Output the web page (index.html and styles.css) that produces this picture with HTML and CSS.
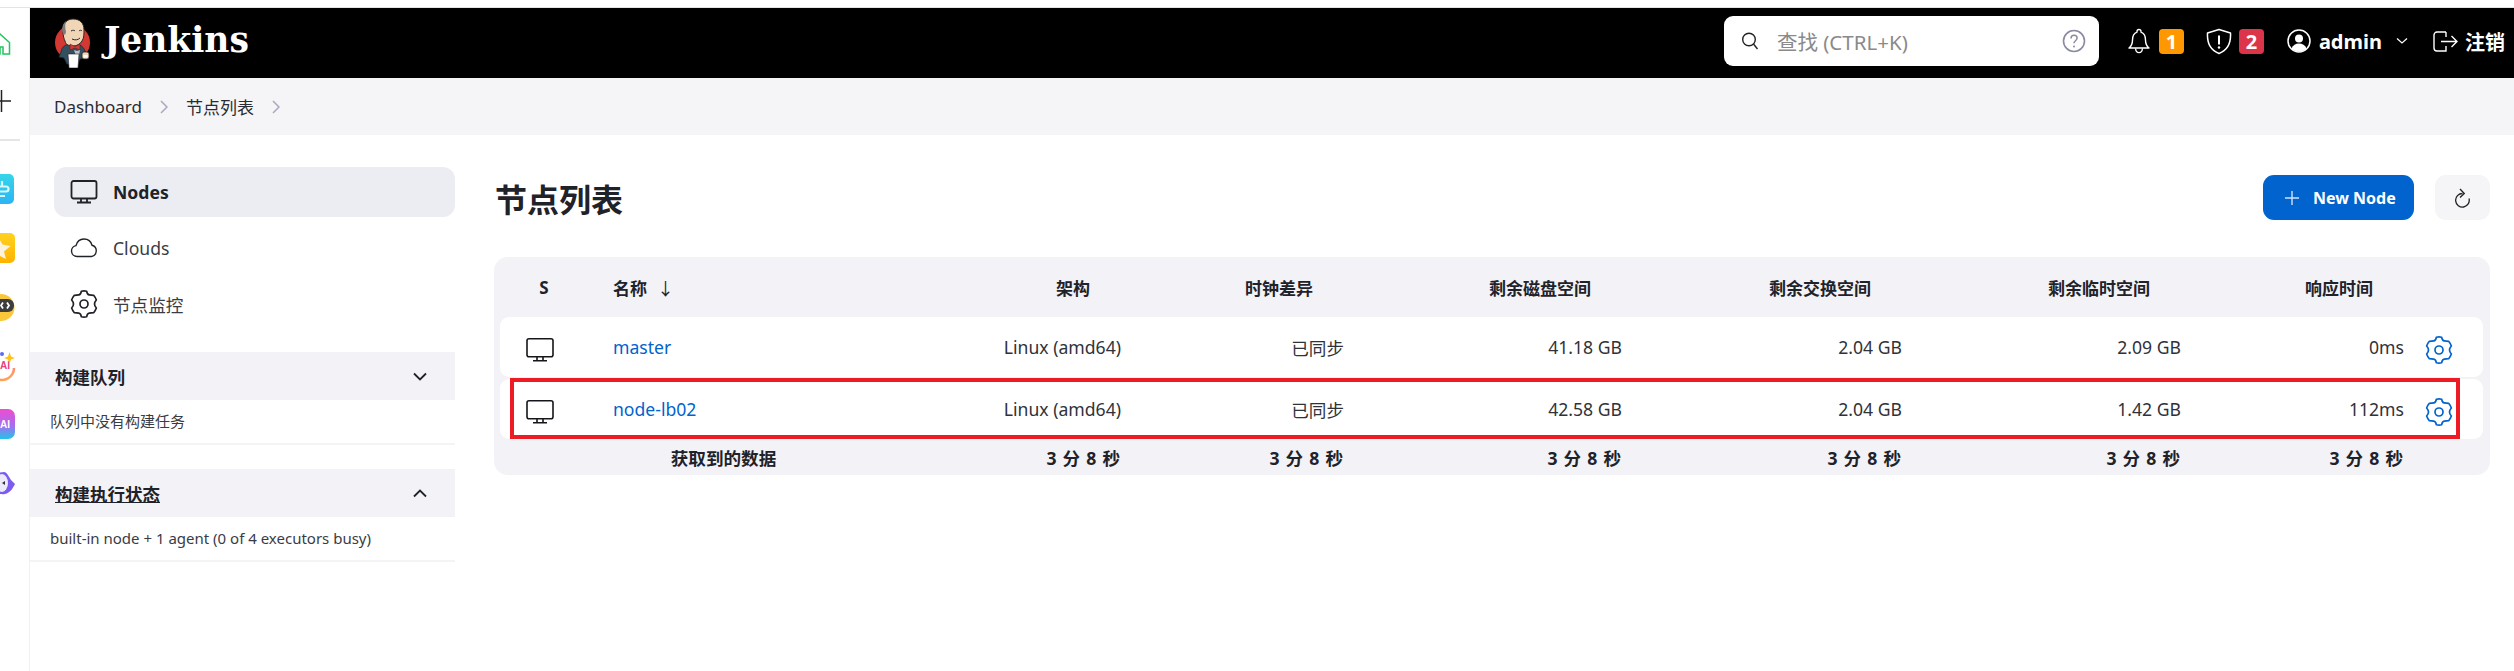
FILE: index.html
```html
<!DOCTYPE html>
<html lang="zh-CN">
<head>
<meta charset="utf-8">
<title>节点列表 - Jenkins</title>
<link rel="stylesheet" href="styles.css">
</head>
<body>
<div class="topline"></div>
<div class="shell">
  <aside class="rail">
    <svg class="ri ri-home" viewBox="0 0 29 22"><path d="M-10 11 0 1l9.500 8.500V21H3v-7H0v7h-8" fill="none" stroke="#22c55e" stroke-width="1.500"/></svg>
    <svg class="ri ri-plus" viewBox="0 0 29 22"><path d="M0 11h11M1.500 0v22" fill="none" stroke="#222" stroke-width="1.500"/></svg>
    <div class="ri-div"></div>
    <svg class="ri ri-30" viewBox="0 0 29 30"><defs><linearGradient id="g1" x1="0" y1="0" x2="0" y2="1"><stop offset="0" stop-color="#37d5e8"/><stop offset="1" stop-color="#2bb4f5"/></linearGradient></defs><rect x="-20" y="0" width="34" height="30" rx="5" fill="url(#g1)"/><path d="M0 12.500h6a2.500 2.500 0 0 1 2.500 2.500A2.500 2.500 0 0 1 6 17.500H0M2 7v5M0 22h5" fill="none" stroke="#d8f7fb" stroke-width="2.200"/></svg>
    <svg class="ri ri-star" viewBox="0 0 29 30"><defs><linearGradient id="g2" x1="0" y1="0" x2="0" y2="1"><stop offset="0" stop-color="#ffd21f"/><stop offset="1" stop-color="#ffb300"/></linearGradient></defs><rect x="-20" y="0" width="35" height="30" rx="5" fill="url(#g2)"/><path d="M-2 4 2.500 11.500 10.500 13 4 18.500 6 26-2 22Z" fill="#fdf3dc"/></svg>
    <svg class="ri ri-bot" viewBox="0 0 29 27"><circle cx="1" cy="13.500" r="13.500" fill="#f9c83a"/><rect x="-8" y="5" width="22" height="13" rx="6" fill="#3d3d3d"/><path d="M3 8.500 1 11.500l2 3M7 8.500l2 3-2 3" fill="none" stroke="#fff" stroke-width="1.800"/></svg>
    <svg class="ri ri-ai" viewBox="0 0 29 30"><defs><linearGradient id="g3" x1="0" y1="0" x2="1" y2="1"><stop offset="0" stop-color="#ff5f9e"/><stop offset="1" stop-color="#ffb347"/></linearGradient></defs><path d="M-10 16a12 12 0 0 0 24 0" fill="none" stroke="url(#g3)" stroke-width="2.500"/><text class="ri-t ri-t-red" x="0" y="17">AI</text><circle cx="2" cy="2" r="2" fill="#5b6cf5"/><path d="M9.500 0 11 4.500 15 6 11 7.500 9.500 12 8 7.500 4 6 8 4.500Z" fill="#fcc419"/></svg>
    <svg class="ri ri-ai2" viewBox="0 0 29 30"><defs><linearGradient id="g4" x1="0" y1="0" x2="0" y2="1"><stop offset="0" stop-color="#f04bd0"/><stop offset=".55" stop-color="#a86cf0"/><stop offset="1" stop-color="#22c4e8"/></linearGradient></defs><rect x="-20" y="0" width="35" height="30" rx="7" fill="url(#g4)"/><text class="ri-t ri-t-white" x="0" y="19">AI</text></svg>
    <svg class="ri ri-blob" viewBox="0 0 29 24"><path d="M-10 12C-10 4-2 0 4 0c3 0 5 5 7 8l4 4c-2 4-5 9-10 10-7 1-15-2-15-10Z" fill="#7c5cf0"/><ellipse cx="2" cy="11" rx="6" ry="9" fill="#ece9fb"/><path d="M5 9 2 11l3 2Z" fill="#333"/></svg>
  </aside>
  <div class="app">
    <header class="hdr">
      <a class="brand">
        <svg class="brand-logo" viewBox="0 0 38 50">
          <circle cx="18.500" cy="24.500" r="17.500" fill="#d33833"/>
          <path d="M7 34C8 28 12 26 18 26s11 1 13 7l1 7-6 1-2 5H13l-3-6-5-1Z" fill="#335061" stroke="#1d2b33" stroke-width=".800"/>
          <path d="M9 13C9 5 13 1 19 1c7 0 11 4 11 11 0 4 0 8-2 11-2 3-5 5-9 5-4 0-7-1-8-5-1-2-2-5-2-10Z" fill="#f0d6b7" stroke="#2a2a2a" stroke-width="1"/>
          <path d="M9 15C7 11 9 5 12 3c-1 4-1 7 0 11l-1 3Z" fill="#7b7b7b"/>
          <path d="M17 13c2-1 3-1 4 0M25 13c1-1 2-1 3 0M18 21c3 1.500 6 1 8-1" fill="none" stroke="#2a2a2a" stroke-width="1"/>
          <path d="M16 26l5 2.500 5-2.500v6l-5-2-5 2Z" fill="#d33833" stroke="#5a1a18" stroke-width=".500"/>
          <path d="M20 32l3 1 3-1-1 5-3 1Z" fill="#b9c4ca"/>
          <path d="M14 36h11l-1 14H15Z" fill="#fff" stroke="#222" stroke-width=".600"/>
          <rect x="28" y="34" width="7" height="7" rx="2" fill="#f0d6b7" stroke="#222" stroke-width=".800"/>
          <rect x="29.500" y="37" width="4" height="2.500" fill="#fff"/>
        </svg>
        <span class="brand-name">Jenkins</span>
      </a>
      <div class="search">
        <svg class="search-ic" viewBox="0 0 18 18"><circle cx="8" cy="7.500" r="6.300" fill="none" stroke="#222" stroke-width="1.400"/><path d="m12.500 12 4 5" stroke="#222" stroke-width="1.400"/></svg>
        <span class="search-ph">查找 (CTRL+K)</span>
        <svg class="search-help" viewBox="0 0 24 24"><circle cx="12" cy="12" r="10.500" fill="none" stroke="#8a8aa3" stroke-width="1.600"/><path d="M9 9.500c0-2 1.400-3.200 3.100-3.200 1.800 0 3 1.200 3 2.800 0 2.600-3.100 2.600-3.100 5.200" fill="none" stroke="#8a8aa3" stroke-width="1.500"/><circle cx="12" cy="17.500" r="1" fill="#8a8aa3"/></svg>
      </div>
      <svg class="h-bell" viewBox="0 0 24 26"><path d="M12 1.500c-1.200 0-2 .8-2 2v.6C6.500 5.300 5.500 8.500 5.500 12c0 4-1.200 6.200-3.500 8h20c-2.300-1.800-3.500-4-3.500-8 0-3.500-1-6.700-4.500-7.900v-.6c0-1.200-.8-2-2-2Z" fill="none" stroke="#fff" stroke-width="1.400" stroke-linejoin="round"/><path d="M8.800 20.500a3.300 3.300 0 1 0 6.400 0" fill="none" stroke="#fff" stroke-width="1.400"/></svg>
      <span class="badge badge-o">1</span>
      <svg class="h-shield" viewBox="0 0 26 27"><path d="M13 1.500 24.500 5c.5 9-2 17-11.500 20.500C3.500 22 1 14 1.500 5Z" fill="none" stroke="#fff" stroke-width="1.500" stroke-linejoin="round"/><path d="M13 7.500v9" stroke="#fff" stroke-width="2"/><circle cx="13" cy="19.500" r="1.200" fill="#fff"/></svg>
      <span class="badge badge-r">2</span>
      <svg class="h-user" viewBox="0 0 24 24"><circle cx="12" cy="12" r="11" fill="none" stroke="#fff" stroke-width="1.500"/><circle cx="12" cy="9.500" r="4" fill="#fff"/><path d="M4.500 19.500c1.500-3.500 4-5 7.500-5s6 1.500 7.500 5c-2 2-4.500 3.200-7.500 3.200s-5.500-1.200-7.500-3.200Z" fill="#fff"/></svg>
      <span class="h-admin">admin</span>
      <svg class="h-chev" viewBox="0 0 12 8"><path d="M1 1.500 6 6l5-4.500" fill="none" stroke="#fff" stroke-width="1.200"/></svg>
      <svg class="h-logout" viewBox="0 0 25 21"><path d="M13 1H4a3 3 0 0 0-3 3v13a3 3 0 0 0 3 3h9v-5M13 1v5" fill="none" stroke="#fff" stroke-width="1.400"/><path d="M8 10.500h16M18.500 5l5.500 5.500-5.500 5.500" fill="none" stroke="#fff" stroke-width="1.400"/></svg>
      <span class="h-out">注销</span>
    </header>
    <nav class="crumbs">
      <span>Dashboard</span>
      <svg class="crumb-sep" viewBox="0 0 8 14"><path d="m1 1 6 6-6 6" fill="none" stroke="#a9a9bd" stroke-width="1.500"/></svg>
      <span>节点列表</span>
      <svg class="crumb-sep" viewBox="0 0 8 14"><path d="m1 1 6 6-6 6" fill="none" stroke="#a9a9bd" stroke-width="1.500"/></svg>
    </nav>
    <div class="page">
      <aside class="side">
        <ul class="menu">
          <li class="menu-item is-active">
            <svg class="menu-ic" viewBox="0 0 28 24"><rect x="1.500" y="1" width="25" height="17.500" rx="2" fill="none" stroke="#1f2229" stroke-width="1.800"/><path d="M11 18.500v3M17 18.500v3M7 22.500h14" fill="none" stroke="#1f2229" stroke-width="1.800"/></svg>
            <span>Nodes</span>
          </li>
          <li class="menu-item">
            <svg class="menu-ic" viewBox="0 0 28 20"><path d="M7 18.500a5.500 5.500 0 0 1-1-10.900C7 3.800 10 1 14 1c4 0 7 2.500 8 6.200a5.800 5.800 0 0 1-.500 11.300Z" fill="none" stroke="#1f2229" stroke-width="1.400"/></svg>
            <span>Clouds</span>
          </li>
          <li class="menu-item">
            <svg class="menu-ic" viewBox="0 0 28 28"><use href="#gear"/></svg>
            <span>节点监控</span>
          </li>
        </ul>
        <section class="panel panel-q">
          <div class="panel-head"><span>构建队列</span><svg class="panel-chev" viewBox="0 0 14 9"><path d="m1 1.500 6 6 6-6" fill="none" stroke="#1f2229" stroke-width="1.800"/></svg></div>
          <div class="panel-body">队列中没有构建任务</div>
        </section>
        <section class="panel panel-e">
          <div class="panel-head"><span class="u">构建执行状态</span><svg class="panel-chev" viewBox="0 0 14 9"><path d="m1 7.500 6-6 6 6" fill="none" stroke="#1f2229" stroke-width="1.800"/></svg></div>
          <div class="panel-body">built-in node + 1 agent (0 of 4 executors busy)</div>
        </section>
      </aside>
      <main class="main">
        <div class="bar">
          <h1 class="title">节点列表</h1>
          <a class="btn-new"><svg class="btn-plus" viewBox="0 0 16 16"><path d="M8 1v14M1 8h14" stroke="#cfe2fb" stroke-width="1.400"/></svg>New Node</a>
          <a class="btn-ref"><svg class="btn-ref-ic" viewBox="0 0 15 20"><path d="M7.500 5.500A6.800 6.800 0 1 0 14 10.500" fill="none" stroke="#222" stroke-width="1.300"/><path d="M5 1l4.300 4.500L5 9.500" fill="none" stroke="#222" stroke-width="1.300"/></svg></a>
        </div>
        <div class="card">
          <table class="tbl">
            <colgroup><col class="c-s"><col class="c-n"><col class="c-a"><col class="c-c"><col class="c-d"><col class="c-w"><col class="c-t"><col class="c-r"><col class="c-g"></colgroup>
            <thead>
              <tr><th class="th-s">S</th><th class="th-n">名称<span class="arrow">↓</span></th><th>架构</th><th>时钟差异</th><th>剩余磁盘空间</th><th>剩余交换空间</th><th>剩余临时空间</th><th>响应时间</th><th></th></tr>
            </thead>
            <tbody>
              <tr>
                <td class="td-s"><svg class="pc" viewBox="0 0 28 24"><rect x="1" y=".8" width="26" height="18" rx="2" fill="none" stroke="#14161a" stroke-width="1.600"/><path d="M11 19v3M17 19v3M7 22.800h14" fill="none" stroke="#14161a" stroke-width="1.600"/></svg></td>
                <td class="td-n"><a class="lnk">master</a></td><td>Linux (amd64)</td><td>已同步</td><td>41.18 GB</td><td>2.04 GB</td><td>2.09 GB</td><td>0ms</td>
                <td class="td-g"><svg class="gear" viewBox="0 0 28 28"><use href="#gear"/></svg></td>
              </tr>
              <tr>
                <td class="td-s"><svg class="pc" viewBox="0 0 28 24"><rect x="1" y=".8" width="26" height="18" rx="2" fill="none" stroke="#14161a" stroke-width="1.600"/><path d="M11 19v3M17 19v3M7 22.800h14" fill="none" stroke="#14161a" stroke-width="1.600"/></svg></td>
                <td class="td-n"><a class="lnk">node-lb02</a></td><td>Linux (amd64)</td><td>已同步</td><td>42.58 GB</td><td>2.04 GB</td><td>1.42 GB</td><td>112ms</td>
                <td class="td-g"><svg class="gear" viewBox="0 0 28 28"><use href="#gear"/></svg></td>
              </tr>
            </tbody>
            <tfoot>
              <tr><td class="tf-l" colspan="2">获取到的数据</td><td>3 分 8 秒</td><td>3 分 8 秒</td><td>3 分 8 秒</td><td>3 分 8 秒</td><td>3 分 8 秒</td><td>3 分 8 秒</td><td></td></tr>
            </tfoot>
          </table>
          <div class="mark"></div>
        </div>
      </main>
    </div>
  </div>
</div>
<svg class="defs" aria-hidden="true"><defs><g id="gear"><path d="M11.300 1.280Q14 .6 16.700 1.280Q17.200 4.600 19.250 4.910Q21.500 5.200 23.660 5.300Q25.500 7.500 26.360 9.980Q24.500 12 24.500 14Q24.500 16 26.360 18.020Q25.500 20.500 23.660 22.700Q21.500 22.800 19.250 23.090Q17.200 23.400 16.700 26.720Q14 27.400 11.300 26.720Q10.800 23.400 8.750 23.090Q6.500 22.800 4.340 22.700Q2.500 20.500 1.640 18.020Q3.500 16 3.500 14Q3.500 12 1.640 9.980Q2.500 7.500 4.340 5.300Q6.500 5.200 8.750 4.910Q10.800 4.600 11.300 1.280Z" fill="none" stroke="currentColor" stroke-width="1.700" stroke-linejoin="round"/><circle cx="14" cy="14" r="4" fill="none" stroke="currentColor" stroke-width="1.700"/></g></defs></svg>
</body>
</html>
```
FILE: styles.css
```css
* { box-sizing: border-box; }
html, body { margin: 0; padding: 0; height: 100%; overflow: hidden; background: #fff; }
body { font-family: "Noto Sans", "Noto Sans CJK SC", sans-serif; color: #1f2229; font-size: 17px; }
.defs { width: 0; height: 0; display: block; }
.topline { height: 8px; border-bottom: 1px solid #e3e3e3; }
.shell { display: flex; height: 663px; }

/* rail */
.rail { width: 30px; flex: none; border-right: 1px solid #f0f0f0; overflow: hidden; display: flex; flex-direction: column; align-items: flex-start; }
.ri { display: block; width: 29px; flex: none; }
.ri-home { height: 22px; margin-top: 25px; }
.ri-plus { height: 22px; margin-top: 35px; }
.ri-div { width: 20px; height: 2px; background: #e6e6e6; margin-top: 27px; flex: none; }
.ri-30 { height: 30px; margin-top: 33px; }
.ri-star { height: 30px; margin-top: 29px; }
.ri-bot { height: 27px; margin-top: 31px; }
.ri-ai { height: 30px; margin-top: 31px; }
.ri-ai2 { height: 30px; margin-top: 27px; }
.ri-blob { height: 24px; margin-top: 33px; }
.ri-t { font-family: "Liberation Sans", sans-serif; font-weight: 700; font-size: 10px; }
.ri-t-red { fill: #e8407a; }
.ri-t-white { fill: #fff; }

.app { flex: 1; min-width: 0; display: flex; flex-direction: column; }

/* header */
.hdr { height: 70px; background: #000; display: flex; align-items: center; padding: 0 9px 0 24px; color: #fff; flex: none; }
.brand { display: flex; align-items: center; }
.brand-logo { width: 38px; height: 50px; display: block; }
.brand-name { font-family: "DejaVu Serif", serif; font-weight: 700; font-size: 34.500px; margin-left: 12px; line-height: 1; margin-top: -6px; }
.search { margin-left: auto; width: 375px; height: 50px; background: #fff; border-radius: 9px; display: flex; align-items: center; padding: 0 13px 0 17px; margin-top: -4px; }
.search-ic { width: 18px; height: 18px; }
.search-ph { margin-left: 18px; font-size: 20.500px; color: #8a8a8a; }
.search-help { width: 24px; height: 24px; margin-left: auto; }
.h-bell { width: 24px; height: 26px; margin-left: 28px; margin-top: -4px; }
.badge { width: 25px; height: 25px; border-radius: 4px; font-weight: 700; font-size: 20px; line-height: 25px; text-align: center; color: #fff; margin-left: 8px; margin-top: -4px; }
.badge-r { margin-left: 7px; }
.badge-o { background: #ff9800; }
.badge-r { background: #dc354b; }
.h-shield { width: 26px; height: 27px; margin-left: 22px; margin-top: -4px; }
.h-user { width: 24px; height: 24px; margin-left: 23px; margin-top: -4px; }
.h-admin { font-weight: 700; font-size: 20px; margin-left: 8px; margin-top: -4px; }
.h-chev { width: 12px; height: 8px; margin-left: 14px; margin-top: -4px; }
.h-logout { width: 25px; height: 21px; margin-left: 25px; margin-top: -4px; }
.h-out { font-weight: 700; font-size: 20px; margin-left: 7px; margin-top: -4px; }

/* breadcrumbs */
.crumbs { height: 57px; background: #f5f5f7; display: flex; align-items: center; padding-left: 24px; flex: none; font-size: 17px; color: #2a2c33; }
.crumb-sep { width: 8px; height: 14px; margin: 0 18px; }

.page { flex: 1; display: flex; min-height: 0; }

/* sidebar */
.side { width: 425px; flex: none; padding-top: 32px; }
.menu { list-style: none; margin: 0 0 0 24px; padding: 0; display: flex; flex-direction: column; gap: 6px; }
.menu-item { height: 50px; display: flex; align-items: center; border-radius: 12px; padding-left: 16px; font-size: 17.600px; color: #3a3c44; }
.menu-item.is-active { background: #ecedf2; font-weight: 700; color: #1f2229; }
.menu-ic { width: 28px; height: 28px; color: #1f2229; margin-right: 15px; flex: none; }
.panel-q { margin-top: 23px; }
.panel-e { margin-top: 24px; }
.panel-head { height: 48px; background: #f2f2f7; display: flex; align-items: center; justify-content: space-between; padding: 0 28px 0 25px; font-weight: 700; font-size: 17.500px; }
.panel-head .u { text-decoration: underline; }
.panel-chev { width: 14px; height: 9px; }
.panel-body { height: 45px; border-bottom: 2px solid #f4f4f6; padding-left: 20px; font-size: 15px; line-height: 43px; color: #3a3c44; }

/* main */
.main { flex: 1; min-width: 0; padding: 40px 24px 0 39px; }
.bar { display: flex; align-items: center; height: 45px; }
.title { margin: 0 auto 0 1px; font-size: 32px; font-weight: 700; }
.btn-new { width: 151px; height: 45px; background: #0063ce; color: #fff; border-radius: 11px; display: flex; align-items: center; padding-left: 21px; font-weight: 700; font-size: 16px; }
.btn-plus { width: 16px; height: 16px; margin-right: 13px; }
.btn-ref { width: 55px; height: 45px; background: #f5f5f7; border-radius: 11px; margin-left: 21px; display: flex; align-items: center; justify-content: center; }
.btn-ref-ic { width: 15px; height: 20px; }

/* table */
.card { position: relative; margin-top: 37px; background: #f2f2f7; border-radius: 14px; padding: 0 6px; height: 218px; }
.tbl { width: 1983px; table-layout: fixed; border-collapse: separate; border-spacing: 0 2px; }
.c-s { width: 88px; } .c-n { width: 311px; } .c-a { width: 237px; } .c-c { width: 223px; }
.c-d { width: 278px; } .c-w { width: 280px; } .c-t { width: 279px; } .c-r { width: 223px; } .c-g { width: 64px; }
.tbl th { height: 56px; font-size: 17px; font-weight: 700; text-align: right; padding: 0 46px 0 0; white-space: nowrap; }
.tbl .th-s { text-align: center; padding: 0; }
.tbl .th-n { text-align: left; padding: 0 0 0 25px; }
.arrow { margin-left: 10px; font-weight: 400; }
.tbl tbody td { height: 60px; background: #fff; text-align: right; padding: 0 15px; font-size: 17.600px; color: #30323a; }
.tbl tbody tr td:first-child { border-radius: 9px 0 0 9px; }
.tbl tbody tr td:last-child { border-radius: 0 9px 9px 0; }
.tbl tbody .td-s { text-align: left; padding: 6px 0 0 26px; }
.tbl tbody .td-n { text-align: left; padding-left: 25px; }
.tbl tbody .td-g { text-align: left; padding: 5px 0 0 6px; }
.pc { width: 28px; height: 24px; display: block; }
.gear { width: 28px; height: 28px; color: #0063ce; display: block; }
.lnk { color: #0063ce; }
.tbl tfoot td { height: 32px; font-weight: 700; font-size: 17.600px; word-spacing: 1.500px; text-align: right; padding: 0 16px; }
.tbl tfoot .tf-l { text-align: center; padding: 0 0 0 48px; }
.mark { position: absolute; left: 16px; top: 121px; width: 1950px; height: 61px; border: 4px solid #ed1c24; }
```
